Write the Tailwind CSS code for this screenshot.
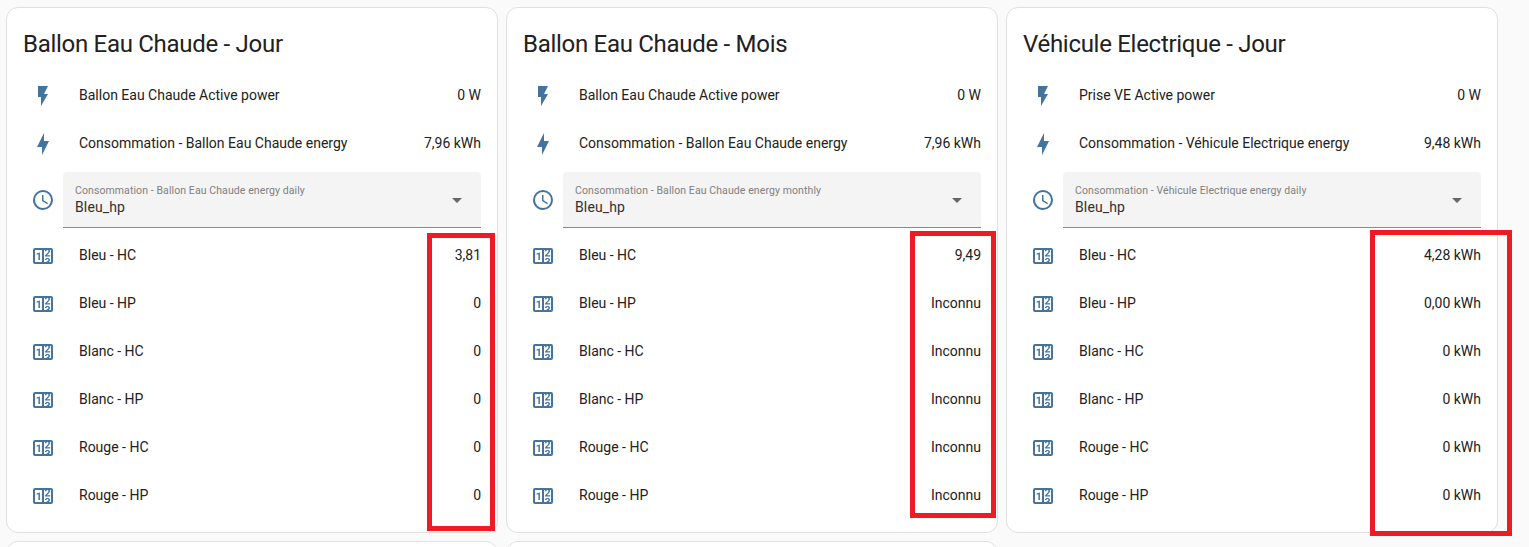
<!DOCTYPE html>
<html lang="fr">
<head>
    <meta charset="UTF-8">
    <meta name="viewport" content="width=device-width, initial-scale=1.0">
    <title>Énergie</title>
    <script src="https://cdn.jsdelivr.net/npm/@tailwindcss/browser@4"></script>
</head>
<body class="bg-[#fafafa] font-['Roboto',sans-serif] text-sm text-[#212121] h-screen overflow-hidden relative">
    <!-- Icons -->
    <svg class="hidden">
        <symbol id="flash" viewBox="0 0 24 24"><path d="M7,2V13H10V22L17,10H13L17,2H7Z"/></symbol>
        <symbol id="bolt" viewBox="0 0 24 24"><path d="M11 15H6L13 1V9H18L11 23V15Z"/></symbol>
        <symbol id="clock" viewBox="0 0 24 24"><path d="M12,20A8,8 0 0,0 20,12A8,8 0 0,0 12,4A8,8 0 0,0 4,12A8,8 0 0,0 12,20M12,2A10,10 0 0,1 22,12A10,10 0 0,1 12,22C6.47,22 2,17.5 2,12A10,10 0 0,1 12,2M12.5,7V12.25L17,14.92L16.25,16.15L11,13V7H12.5Z"/></symbol>
        <symbol id="counter" viewBox="0 0 24 24"><path d="M4,4H20A2,2 0 0,1 22,6V18A2,2 0 0,1 20,20H4A2,2 0 0,1 2,18V6A2,2 0 0,1 4,4M4,6V18H11V6H4M20,18V6H18.76C19,6.54 18.95,7.07 18.95,7.13C18.88,7.8 18.41,8.5 18.24,8.75L15.91,11.3L19.23,11.28L19.24,12.5L14.04,12.47L14,11.47C14,11.47 17.05,8.24 17.2,7.95C17.34,7.67 17.91,6 16.5,6C15.27,6.05 15.41,7.3 15.41,7.3L13.87,7.31C13.87,7.31 13.88,6.65 14.25,6H13V18H15.58L15.57,17.14L16.54,17.13C16.54,17.13 17.45,16.97 17.46,16.08C17.5,15.08 16.65,15.08 16.5,15.08C16.37,15.08 15.43,15.13 15.43,15.95H13.91C13.91,15.95 13.95,13.89 16.5,13.89C19.1,13.89 18.96,15.91 18.96,15.91C18.96,15.91 19,17.16 17.85,17.63L18.37,18H20M8.92,16H7.42V10.2L5.62,10.76V9.53L8.76,8.41H8.92V16Z"/></symbol>
    </svg>

    <main id="cards" class="grid grid-cols-[repeat(3,492px)] content-start gap-2 pl-1.5 pt-[7px] h-screen overflow-hidden"></main>

    <!-- Highlighted values -->
    <div class="absolute left-[427px] top-[233px] w-[68px] h-[298px] border-5 border-[#ed1c24]"></div>
    <div class="absolute left-[910px] top-[231px] w-[86px] h-[287px] border-5 border-[#ed1c24]"></div>
    <div class="absolute left-[1370px] top-[230px] w-[142px] h-[306px] border-5 border-[#ed1c24]"></div>

    <script>
        const tariffs = ['Bleu - HC', 'Bleu - HP', 'Blanc - HC', 'Blanc - HP', 'Rouge - HC', 'Rouge - HP'];
        const cards = [
            {
                title: 'Ballon Eau Chaude - Jour',
                power: ['Ballon Eau Chaude Active power', '0 W'],
                energy: ['Consommation - Ballon Eau Chaude energy', '7,96 kWh'],
                select: 'Consommation - Ballon Eau Chaude energy daily',
                values: ['3,81', '0', '0', '0', '0', '0']
            },
            {
                title: 'Ballon Eau Chaude - Mois',
                power: ['Ballon Eau Chaude Active power', '0 W'],
                energy: ['Consommation - Ballon Eau Chaude energy', '7,96 kWh'],
                select: 'Consommation - Ballon Eau Chaude energy monthly',
                values: ['9,49', 'Inconnu', 'Inconnu', 'Inconnu', 'Inconnu', 'Inconnu']
            },
            {
                title: 'Véhicule Electrique - Jour',
                power: ['Prise VE Active power', '0 W'],
                energy: ['Consommation - Véhicule Electrique energy', '9,48 kWh'],
                select: 'Consommation - Véhicule Electrique energy daily',
                values: ['4,28 kWh', '0,00 kWh', '0 kWh', '0 kWh', '0 kWh', '0 kWh']
            }
        ];

        const icon = (name) => `
            <div class="w-10 flex justify-center shrink-0">
                <svg class="size-6 fill-[#44739e]"><use href="#${name}"/></svg>
            </div>`;

        const row = (name, label, value) => `
            <div class="flex items-center h-10">
                ${icon(name)}
                <div class="flex-1 pl-4 pb-0.5">${label}</div>
                <div class="pb-0.5">${value}</div>
            </div>`;

        const card = (c) => `
            <div class="bg-white border border-[#e0e0e0] rounded-xl h-[526px] px-4 pb-4">
                <h1 class="text-2xl leading-[48px] pt-3 pb-2 h-[68px] tracking-[-0.288px]">${c.title}</h1>
                <div class="flex flex-col gap-2">
                    ${row('flash', ...c.power)}
                    ${row('bolt', ...c.energy)}
                    <div class="flex items-center h-14">
                        ${icon('clock')}
                        <div class="flex-1 h-14 bg-[#f4f4f4] border-b border-[#8a8a8a] rounded-t px-3 flex items-center justify-between">
                            <div>
                                <div class="text-[10.5px] leading-4 tracking-[0.094px] text-[#808080]">${c.select}</div>
                                <div class="leading-4 pb-0.5 tracking-[0.13px] text-[#303030]">Bleu_hp</div>
                            </div>
                            <svg class="size-6 fill-[#666]" viewBox="0 0 24 24"><path d="M7 10l5 5 5-5z"/></svg>
                        </div>
                    </div>
                    ${tariffs.map((t, i) => row('counter', t, c.values[i])).join('')}
                </div>
            </div>`;

        // The next row of cards starts at the bottom edge
        const nextCard = '<div class="bg-white border border-[#e0e0e0] rounded-xl h-6"></div>';

        document.getElementById('cards').innerHTML = cards.map(card).join('') + nextCard.repeat(2);
    </script>
</body>
</html>
